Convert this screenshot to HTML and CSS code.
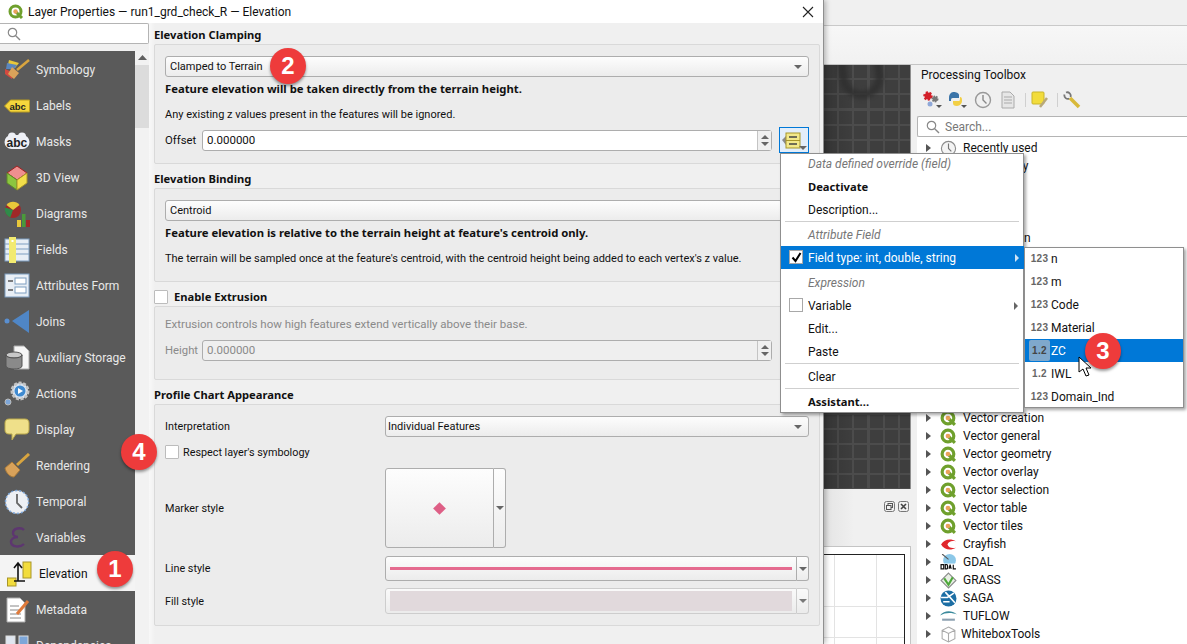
FILE: index.html
```html
<!DOCTYPE html>
<html lang="en">
<head>
    <meta charset="UTF-8">
    <title>Layer Properties - Elevation</title>
    <link rel="stylesheet" href="styles.css">
</head>
<body>
    <svg class="defs" width="0" height="0">
        <symbol id="qgis" viewBox="0 0 16 16">
            <circle cx="7.5" cy="7.5" r="5.5" fill="#fff" stroke="#6fa02d" stroke-width="3"/>
            <path d="M8 8l6 6" stroke="#6fa02d" stroke-width="3"/>
            <circle cx="7.5" cy="7.5" r="2.2" fill="#e8a25a"/>
        </symbol>
        <symbol id="clock" viewBox="0 0 24 24">
            <circle cx="12" cy="12" r="10" fill="#f4f4f4" stroke="#8c8c8c" stroke-width="1.6"/>
            <path d="M12 5v7l4 4" fill="none" stroke="#777" stroke-width="1.6"/>
        </symbol>
        <symbol id="arrow" viewBox="0 0 8 8">
            <path d="M0 2h8L4 6z" fill="#666"/>
        </symbol>
    </svg>

    <!-- main window behind the dialog -->
    <div class="app">
        <div class="menubar"></div>
        <div class="toolbar"></div>
        <div class="workspace">
            <div class="mapside">
                <div class="canvas"><div class="blob"></div></div>
                <div class="dockhead">
                    <svg width="11" height="11" viewBox="0 0 11 11"><rect x="0.500" y="0.500" width="10" height="10" rx="2" fill="none" stroke="#777"/><rect x="4" y="2.500" width="4.500" height="4" fill="none" stroke="#555"/><rect x="2.500" y="4.500" width="4.500" height="4" fill="#f0f0f0" stroke="#555"/></svg>
                    <svg width="11" height="11" viewBox="0 0 11 11"><rect x="0.500" y="0.500" width="10" height="10" rx="2" fill="none" stroke="#777"/><path d="M3 3l5 5M8 3l-5 5" stroke="#444" stroke-width="1.600"/></svg>
                </div>
                <div class="chart">
                    <div class="plot"></div>
                </div>
            </div>
            <div class="splitter"></div>
            <div class="toolbox">
                <div class="toolbox-title">Processing Toolbox</div>
                <div class="toolbox-icons">
                    <svg width="22" height="20" viewBox="0 0 22 20"><circle cx="6" cy="6" r="3.500" fill="#d3202a" stroke="#d3202a" stroke-dasharray="2 1.500" stroke-width="2.500"/><circle cx="13" cy="9" r="2.500" fill="#777" stroke="#777" stroke-dasharray="1.500 1" stroke-width="2"/><circle cx="8" cy="14" r="2.500" fill="#8fa8d8"/><path d="M14 15h6l-3 3z" fill="#555"/></svg>
                    <svg width="22" height="20" viewBox="0 0 22 20"><path d="M2 8c0-5 3-6 5-6s5 1 5 3v3H6c-2 0-2 1-2 3H2z" fill="#3b74a8"/><path d="M13 7c2 0 2 2 2 4s-2 5-5 5-4-1-4-3v-2h6c1 0 1-2 1-4z" fill="#f2cf45"/><path d="M14 15h6l-3 3z" fill="#555"/></svg>
                    <svg width="22" height="18" viewBox="0 0 18 18"><circle cx="9" cy="9" r="7.500" fill="#f0f0f0" stroke="#999" stroke-width="1.400"/><path d="M9 4v5l3.500 3.500" fill="none" stroke="#888" stroke-width="1.400"/></svg>
                    <svg width="22" height="18" viewBox="0 0 16 18"><path d="M2 1h8l4 4v12H2z" fill="#e6e6e6" stroke="#aaa"/><path d="M4 6h8M4 9h8M4 12h8" stroke="#aaa"/></svg>
                    <i class="tool-sep"></i>
                    <svg width="22" height="18" viewBox="0 0 18 18"><rect x="1" y="1" width="12" height="12" rx="1" fill="#f2dc3c" stroke="#c9b52a"/><path d="M9 16l7-9" stroke="#b8a87a" stroke-width="2.500"/></svg>
                    <i class="tool-sep"></i>
                    <svg width="22" height="18" viewBox="0 0 18 18"><path d="M1.500 3.500a3.500 3.500 0 0 0 5 4M3 1.500a3.500 3.500 0 0 1 4.500 4.500" fill="none" stroke="#777" stroke-width="1.800"/><path d="M7 7l9 9" stroke="#d8b93a" stroke-width="3.500"/></svg>
                </div>
                <div class="toolbox-search">
                    <svg width="14" height="14" viewBox="0 0 14 14"><circle cx="5.500" cy="5.500" r="4.200" fill="none" stroke="#888" stroke-width="1.200"/><path d="M8.700 8.700L13 13" stroke="#888" stroke-width="1.400"/></svg>
                    <span>Search...</span>
                </div>
                <ul class="tree">
                    <li><i class="twist"></i><svg class="tree-icon" width="16" height="16"><use href="#clock"/></svg>Recently used</li>
                    <li><i class="twist"></i><svg class="tree-icon" width="16" height="16"><use href="#qgis"/></svg>Cartography</li>
                    <li></li>
                    <li></li>
                    <li></li>
                    <li><i class="twist"></i><svg class="tree-icon" width="16" height="16"><use href="#qgis"/></svg>Interpolation</li>
                    <li></li>
                    <li></li>
                    <li></li>
                    <li></li>
                    <li></li>
                    <li></li>
                    <li></li>
                    <li></li>
                    <li></li>
                    <li><i class="twist"></i><svg class="tree-icon" width="16" height="16"><use href="#qgis"/></svg>Vector creation</li>
                    <li><i class="twist"></i><svg class="tree-icon" width="16" height="16"><use href="#qgis"/></svg>Vector general</li>
                    <li><i class="twist"></i><svg class="tree-icon" width="16" height="16"><use href="#qgis"/></svg>Vector geometry</li>
                    <li><i class="twist"></i><svg class="tree-icon" width="16" height="16"><use href="#qgis"/></svg>Vector overlay</li>
                    <li><i class="twist"></i><svg class="tree-icon" width="16" height="16"><use href="#qgis"/></svg>Vector selection</li>
                    <li><i class="twist"></i><svg class="tree-icon" width="16" height="16"><use href="#qgis"/></svg>Vector table</li>
                    <li><i class="twist"></i><svg class="tree-icon" width="16" height="16"><use href="#qgis"/></svg>Vector tiles</li>
                    <li><i class="twist"></i><svg class="tree-icon" width="16" height="16" viewBox="0 0 16 16"><path d="M15 5C10 2 4 3 1 8c3 5 9 6 14 3-4 1-7 0-8-3 1-3 4-4 8-3z" fill="#e0262c"/></svg>Crayfish</li>
                    <li><i class="twist"></i><svg class="tree-icon" width="16" height="16" viewBox="0 0 16 16"><circle cx="9" cy="6" r="6" fill="#8cc8e8"/><path d="M2 0l6 5" stroke="#555"/><rect x="0" y="9" width="16" height="7" fill="#fff"/><path d="M1 10h2.500v4H1zM5 10h1.500c1 0 1 4 0 4H5zM8.500 14l1-4 1 4M12.500 10v4h2.500" fill="none" stroke="#111" stroke-width="1.100"/></svg>GDAL</li>
                    <li><i class="twist"></i><svg class="tree-icon" width="16" height="16" viewBox="0 0 16 16"><path d="M8 1l7 7-7 7-7-7z" fill="#e8efe4" stroke="#8a8a8a"/><path d="M4 6l4 6 4-7" fill="none" stroke="#4ea83a" stroke-width="2"/></svg>GRASS</li>
                    <li><i class="twist"></i><svg class="tree-icon" width="16" height="16" viewBox="0 0 16 16"><circle cx="8" cy="8" r="7.500" fill="#1c6ea4"/><path d="M1 7h6l6-4M5 2l9 10M3 11h6" fill="none" stroke="#fff" stroke-width="1.500"/></svg>SAGA</li>
                    <li><i class="twist"></i><svg class="tree-icon" width="16" height="16" viewBox="0 0 16 16"><path d="M0 7c4-5 11-5 16-1-5-2-11-2-16 1z" fill="#3a8a9c"/><path d="M2 11h12" stroke="#8ca0b0" stroke-width="2"/></svg>TUFLOW</li>
                    <li class="tree-last"><i class="twist"></i><svg class="tree-icon" width="16" height="16" viewBox="0 0 16 16"><path d="M8 1l6 3v8l-6 3-6-3V4zM2 4l6 3 6-3M8 7v8" fill="#fff" stroke="#aaa"/></svg>WhiteboxTools</li>
                </ul>
            </div>
        </div>
    </div>

    <!-- layer properties dialog -->
    <div class="dialog">
        <div class="titlebar">
            <svg width="16" height="16"><use href="#qgis"/></svg>
            <span class="title-text">Layer Properties — run1_grd_check_R — Elevation</span>
            <svg class="close" width="12" height="12" viewBox="0 0 12 12"><path d="M1 1l10 10M11 1L1 11" stroke="#222" stroke-width="1.100"/></svg>
        </div>
        <div class="dialog-body">
            <div class="sidebar">
                <div class="side-search">
                    <svg width="14" height="14" viewBox="0 0 14 14"><circle cx="5.500" cy="5.500" r="4.200" fill="none" stroke="#888" stroke-width="1.200"/><path d="M8.700 8.700L13 13" stroke="#888" stroke-width="1.400"/></svg>
                </div>
                <div class="side-main">
                    <ul class="side-list">
                        <li><svg width="26" height="24" viewBox="0 0 26 24"><path d="M5 2l10 3-4 5-8 1z" fill="#e8c83a"/><path d="M3 5l10 2-3 4-8 0z" fill="#5a86bd"/><path d="M1 11l9 4-2 6-7-5z" fill="#d3493f"/><path d="M8 9l7 6-5 6-6-5z" fill="#d9a25a"/><path d="M13 12l12-10" stroke="#d9a53f" stroke-width="2.500"/></svg>Symbology</li>
                        <li><svg width="26" height="24" viewBox="0 0 26 24"><path d="M0.500 12l6-6h19v12H6.500z" fill="#f5d63c" stroke="#b79a20"/><text x="5.500" y="15.500" class="icon-text">abc</text></svg>Labels</li>
                        <li><svg width="26" height="24" viewBox="0 0 26 24"><rect x="0.500" y="5" width="25" height="14" rx="7" fill="#eef0f6"/><circle cx="8" cy="6.500" r="4" fill="#eef0f6"/><circle cx="18" cy="6.500" r="4" fill="#eef0f6"/><text x="2.500" y="16.500" class="icon-text big">abc</text></svg>Masks</li>
                        <li><svg width="26" height="26" viewBox="0 0 26 26"><path d="M13 1l10 7-10 7L3 8z" fill="#ee8f8f" stroke="#a02020"/><path d="M3 8l10 7v10L3 18z" fill="#8cc63f" stroke="#5e8a2a"/><path d="M23 8l-10 7v10l10-7z" fill="#f2de4a" stroke="#a8962a"/></svg>3D View</li>
                        <li><svg width="26" height="26" viewBox="0 0 26 26"><circle cx="9" cy="9" r="8" fill="#a02828"/><path d="M2.500 4a8 8 0 0 1 13 0L9 9z" fill="#e8c83a"/><path d="M9 9L1.300 6.500a8 8 0 0 0 5 10z" fill="#2f8a4a"/><rect x="13" y="19" width="4" height="7" fill="#e8c83a"/><rect x="18" y="13" width="3.500" height="13" fill="#4a9a3a"/><rect x="22" y="19" width="4" height="7" fill="#a02828"/></svg>Diagrams</li>
                        <li><svg width="26" height="26" viewBox="0 0 26 26"><rect x="1" y="2" width="24" height="22" fill="#e8eef5" stroke="#7d9dc0"/><path d="M1 7h24M1 12h24M1 17h24" stroke="#7d9dc0"/><rect x="5" y="0" width="7" height="26" fill="#f2ea70"/><rect x="7.500" y="3" width="2" height="2" fill="#fff"/></svg>Fields</li>
                        <li><svg width="26" height="26" viewBox="0 0 26 26"><rect x="1" y="1" width="24" height="23" fill="#e8eef5" stroke="#7d9dc0"/><path d="M4 8h5M4 17h5" stroke="#555" stroke-width="1.500"/><rect x="11" y="5" width="11" height="6" fill="#fff" stroke="#7d9dc0"/><rect x="11" y="14" width="11" height="6" fill="#fff" stroke="#7d9dc0"/></svg>Attributes Form</li>
                        <li><svg width="26" height="26" viewBox="0 0 26 26"><circle cx="3" cy="12" r="2.500" fill="#5a8fd0"/><path d="M8 12L25 1v23z" fill="#4f86c6"/></svg>Joins</li>
                        <li><svg width="26" height="26" viewBox="0 0 26 26"><path d="M10 1h10l5 5v18H10z" fill="#f6f6f6" stroke="#aaa"/><ellipse cx="10" cy="10" rx="8" ry="3" fill="#c8c8c8" stroke="#555"/><path d="M2 10v11c0 4 16 4 16 0V10c0 4-16 4-16 0z" fill="#8a8a8a" stroke="#555"/></svg>Auxiliary Storage</li>
                        <li><svg width="26" height="26" viewBox="0 0 26 26"><circle cx="16" cy="10" r="8" fill="#dce6f2" stroke="#c4c4c4" stroke-width="3" stroke-dasharray="3 1.500"/><circle cx="16" cy="10" r="5.500" fill="#3f8ad0"/><path d="M14 7l5 3-5 3z" fill="#fff"/><circle cx="4" cy="21" r="3" fill="#7da6d8" stroke="#bbb"/></svg>Actions</li>
                        <li><svg width="26" height="24" viewBox="0 0 26 24"><path d="M5 1h16c3 0 4 2 4 4v7c0 3-2 4-4 4H12l-4 6v-6H5c-3 0-4-2-4-4V5c0-2 1-4 4-4z" fill="#efe08a" stroke="#bba94a"/></svg>Display</li>
                        <li><svg width="26" height="26" viewBox="0 0 26 26"><path d="M1 15l7-6 8 8-6 7c-4 0-8-4-9-9z" fill="#d9a25a" stroke="#a87a3a"/><path d="M13 12L25 1" stroke="#d9a53f" stroke-width="3"/></svg>Rendering</li>
                        <li><svg width="26" height="26" viewBox="0 0 26 26"><circle cx="13" cy="13" r="11.500" fill="#eef0f4" stroke="#7da6d8" stroke-width="1.500" stroke-dasharray="2 2"/><path d="M13 5v9l5 5" fill="none" stroke="#666" stroke-width="1.800"/></svg>Temporal</li>
                        <li><svg width="26" height="24" viewBox="0 0 26 24"><path d="M20 4c-3-3-11-2-11 3 0 2 2 4 5 4-4 0-7 2-7 5 0 5 9 6 13 2" fill="none" stroke="#5d3670" stroke-width="2.400"/></svg>Variables</li>
                        <li class="side-active"><svg width="26" height="26" viewBox="0 0 26 26"><rect x="16" y="1" width="8" height="16" fill="#f2dc3c" stroke="#a8962a"/><rect x="0.500" y="17" width="8.500" height="8" fill="#f2dc3c" stroke="#a8962a"/><path d="M11 20V3M7 7l4-5 4 5M7 20h11" fill="none" stroke="#111" stroke-width="1.600"/></svg>Elevation</li>
                        <li><svg width="26" height="26" viewBox="0 0 26 26"><path d="M3 1h13l5 5v19H3z" fill="#fff" stroke="#aaa"/><path d="M6 9h9M6 13h9M6 17h11M6 21h11" stroke="#888"/><path d="M13 17L24 4" stroke="#e07a3a" stroke-width="3"/></svg>Metadata</li>
                        <li><svg width="26" height="26" viewBox="0 0 26 26"><rect x="2" y="3" width="9" height="9" fill="#dfe6f0" stroke="#ddd"/><rect x="15" y="3" width="9" height="9" fill="#7da6d8" stroke="#ddd"/><rect x="8" y="15" width="9" height="9" fill="#7da6d8" stroke="#ddd"/></svg>Dependencies</li>
                    </ul>
                    <div class="side-scroll">
                        <svg width="9" height="6" viewBox="0 0 9 6"><path d="M0 5h9L4.500 0z" fill="#606060"/></svg>
                        <div class="side-thumb"></div>
                    </div>
                </div>
            </div>

            <div class="pane">
                <div class="section-title first">Elevation Clamping</div>
                <div class="group group-clamp">
                    <div class="combo">Clamped to Terrain<svg width="8" height="8"><use href="#arrow"/></svg></div>
                    <div class="note-bold">Feature elevation will be taken directly from the terrain height.</div>
                    <div class="note">Any existing z values present in the features will be ignored.</div>
                    <div class="spin-row">
                        <span class="spin-label">Offset</span>
                        <div class="spin"><span class="spin-value">0.000000</span><span class="spin-btns"><i class="up"></i><i class="down"></i></span></div>
                        <div class="dd-btn">
                            <svg width="26" height="20" viewBox="0 0 26 20"><path d="M0 9l4-4v9z" fill="#8a8a8a"/><rect x="4" y="2" width="14" height="15" fill="#f2e88a" stroke="#a8962a"/><path d="M4 9.500h14" stroke="#a8962a"/><path d="M7 6h8M7 13h8" stroke="#444" stroke-width="1.300"/><path d="M17 15h8l-4 4z" fill="#666"/></svg>
                        </div>
                    </div>
                </div>

                <div class="section-title">Elevation Binding</div>
                <div class="group group-bind">
                    <div class="combo">Centroid</div>
                    <div class="note-bold">Feature elevation is relative to the terrain height at feature's centroid only.</div>
                    <div class="note">The terrain will be sampled once at the feature's centroid, with the centroid height being added to each vertex's z value.</div>
                </div>

                <div class="section-title check-title"><i class="check"></i>Enable Extrusion</div>
                <div class="group group-extrude">
                    <div class="note muted">Extrusion controls how high features extend vertically above their base.</div>
                    <div class="spin-row muted spin-end">
                        <span class="spin-label">Height</span>
                        <div class="spin spin-off"><span class="spin-value">0.000000</span><span class="spin-btns"><i class="up"></i><i class="down"></i></span></div>
                    </div>
                </div>

                <div class="section-title">Profile Chart Appearance</div>
                <div class="group group-profile">
                    <div class="form-row row-interp">
                        <span class="form-label">Interpretation</span>
                        <div class="combo grow">Individual Features<svg width="8" height="8"><use href="#arrow"/></svg></div>
                    </div>
                    <div class="check-row"><i class="check"></i>Respect layer's symbology</div>
                    <div class="form-row row-marker">
                        <span class="form-label">Marker style</span>
                        <div class="sym-btn marker-btn"><i class="diamond"></i></div>
                        <div class="sym-arrow"><svg width="8" height="8"><use href="#arrow"/></svg></div>
                    </div>
                    <div class="form-row row-line">
                        <span class="form-label">Line style</span>
                        <div class="sym-btn grow"><i class="line-swatch"></i></div>
                        <div class="sym-arrow"><svg width="8" height="8"><use href="#arrow"/></svg></div>
                    </div>
                    <div class="form-row row-fill">
                        <span class="form-label">Fill style</span>
                        <div class="sym-btn grow sym-off"><i class="fill-swatch"></i></div>
                        <div class="sym-arrow sym-off"><svg width="8" height="8"><use href="#arrow"/></svg></div>
                    </div>
                </div>
            </div>
        </div>
    </div>

    <!-- data defined menu -->
    <div class="menu menu-main">
        <div class="menu-item head first-item">Data defined override (field)</div>
        <div class="menu-item strong">Deactivate</div>
        <div class="menu-item">Description...</div>
        <div class="menu-sep"></div>
        <div class="menu-item head">Attribute Field</div>
        <div class="menu-item active"><i class="menu-check"><svg width="11" height="11" viewBox="0 0 11 11"><path d="M1.500 5.500l3 3.500 5-8" fill="none" stroke="#000" stroke-width="2"/></svg></i>Field type: int, double, string<b class="sub"></b></div>
        <div class="menu-item head after-active">Expression</div>
        <div class="menu-item"><i class="menu-check"></i>Variable<b class="sub"></b></div>
        <div class="menu-item">Edit...</div>
        <div class="menu-item">Paste</div>
        <div class="menu-sep"></div>
        <div class="menu-item">Clear</div>
        <div class="menu-sep"></div>
        <div class="menu-item strong">Assistant...</div>
    </div>

    <div class="menu menu-fields">
        <div class="field-item"><span class="type">123</span>n</div>
        <div class="field-item"><span class="type">123</span>m</div>
        <div class="field-item"><span class="type">123</span>Code</div>
        <div class="field-item"><span class="type">123</span>Material</div>
        <div class="field-item active"><span class="type boxed">1.2</span>ZC</div>
        <div class="field-item"><span class="type">1.2</span>IWL</div>
        <div class="field-item"><span class="type">123</span>Domain_Ind</div>
    </div>

    <svg class="cursor" width="14" height="21" viewBox="0 0 14 21"><path d="M1 1v15l4-3 3 7 3-1-3-7h5z" fill="#fff" stroke="#000"/></svg>

    <div class="badge badge-1">1</div>
    <div class="badge badge-2">2</div>
    <div class="badge badge-3">3</div>
    <div class="badge badge-4">4</div>
</body>
</html>
```

FILE: styles.css
```css
* {
    box-sizing: border-box;
}

html, body {
    margin: 0;
    height: 100%;
}

body {
    position: relative;
    width: 1187px;
    height: 644px;
    overflow: hidden;
    background-color: #f0f0f0;
    font-family: Roboto, sans-serif;
    font-size: 12px;
    color: #111;
}

ul {
    list-style: none;
    margin: 0;
    padding: 0;
}

.defs {
    position: absolute;
}

/* main window */
.app {
    display: flex;
    flex-direction: column;
    height: 644px;
    padding-left: 824px;
}

.menubar {
    height: 26px;
    background-color: #f0f0f0;
    border-bottom: 1px solid #c9c9c9;
}

.toolbar {
    height: 39px;
    background: linear-gradient(#f7f7f7, #f1f1f1);
    border-bottom: 1px solid #c4c4c4;
}

.workspace {
    flex: 1;
    display: flex;
    min-height: 0;
}

.mapside {
    width: 87px;
    display: flex;
    flex-direction: column;
}

.canvas {
    position: relative;
    height: 424px;
    overflow: hidden;
    background-color: #3e3e3e;
    background-image:
        linear-gradient(90deg, rgba(0, 0, 0, 0.15), transparent 30px),
        repeating-linear-gradient(90deg, transparent 0 13px, #4c4c4c 13px 15.2px),
        repeating-linear-gradient(180deg, transparent 0 13px, #4c4c4c 13px 15.2px);
    border-right: 1px solid #8f8f8f;
}

.blob {
    position: absolute;
    left: 14px;
    top: -32px;
    width: 44px;
    height: 66px;
    border: 8px solid #2e2e2e;
    border-radius: 0 0 22px 22px;
    transform: rotate(-8deg);
    filter: blur(2px);
    opacity: 0.8;
}

.dockhead {
    height: 57px;
    display: flex;
    justify-content: flex-end;
    gap: 3px;
    padding: 12px 2px 0 0;
    background: linear-gradient(90deg, #e4e4e4, #f0f0f0 30px);
}

.chart {
    flex: 1;
    background-color: #fff;
    border-top: 1px solid #c4c4c4;
    border-right: 1px solid #c4c4c4;
    padding-top: 7px;
}

.plot {
    height: 100%;
    width: 81px;
    border-top: 1px solid #222;
    border-right: 1px solid #222;
    background-image:
        linear-gradient(#e3e3e3, #e3e3e3),
        linear-gradient(#e3e3e3, #e3e3e3),
        linear-gradient(#e3e3e3, #e3e3e3),
        linear-gradient(#e3e3e3, #e3e3e3);
    background-size: 1px 100%, 1px 100%, 100% 1px, 100% 1px;
    background-position: 10px 0, 52px 0, 0 51px, 0 82px;
    background-repeat: no-repeat;
}

.splitter {
    width: 6px;
    background-color: #f0f0f0;
}

.toolbox {
    flex: 1;
    display: flex;
    flex-direction: column;
    min-width: 0;
}

.toolbox-title {
    height: 22px;
    padding: 2px 0 0 4px;
    line-height: 16px;
}

.toolbox-icons {
    display: flex;
    align-items: center;
    gap: 3px;
    height: 29px;
    padding: 0 0 3px 5px;
}

.tool-sep {
    width: 1px;
    height: 14px;
    margin-left: 3px;
    background-color: #d0d0d0;
}

.toolbox-search {
    display: flex;
    align-items: center;
    gap: 5px;
    height: 21px;
    padding-left: 8px;
    background-color: #fff;
    border: 1px solid #b4b4b4;
    border-right: 0;
    border-radius: 2px 0 0 2px;
    color: #777;
}

.tree {
    flex: 1;
    overflow: hidden;
    background-color: #fff;
    padding-top: 2px;
}

.tree li {
    display: flex;
    align-items: center;
    height: 18px;
    padding-left: 9px;
    white-space: nowrap;
}

.twist {
    width: 0;
    height: 0;
    border-left: 5px solid #555;
    border-top: 4px solid transparent;
    border-bottom: 4px solid transparent;
    margin-right: 9px;
}

.tree-icon {
    margin-right: 6px;
    width: 17px;
    height: 17px;
}

.tree-last .tree-icon {
    margin-right: 4px;
}

/* dialog */
.dialog {
    position: absolute;
    left: 0;
    top: 0;
    width: 824px;
    height: 644px;
    display: flex;
    flex-direction: column;
    background-color: #f0f0f0;
    border-right: 1px solid #8f8f8f;
    box-shadow: 2px 0 5px rgba(0, 0, 0, 0.25);
}

.titlebar {
    height: 23px;
    flex: none;
    display: flex;
    align-items: center;
    gap: 4px;
    padding: 0 9px 0 8px;
    background-color: #fff;
}

.title-text {
    flex: 1;
}

.dialog-body {
    flex: 1;
    display: flex;
    min-height: 0;
}

.sidebar {
    width: 149px;
    flex: none;
    display: flex;
    flex-direction: column;
}

.side-search {
    height: 21px;
    flex: none;
    margin-bottom: 7px;
    padding: 3px 0 0 7px;
    background-color: #fff;
    border: 1px solid #b4b4b4;
    border-width: 1px 1px 1px 0;
    border-radius: 0 2px 2px 0;
}

.side-main {
    flex: 1;
    display: flex;
    min-height: 0;
}

.side-list {
    width: 135px;
    overflow: hidden;
    background-color: #5a5a5a;
    color: #e8e8e8;
}

.side-list li {
    display: flex;
    align-items: center;
    gap: 6px;
    height: 36px;
    padding: 2px 0 0 4px;
    white-space: nowrap;
}

.side-list svg {
    flex: none;
}

.side-list .side-active {
    padding-left: 7px;
    color: #111;
    background-color: #f4f4f4;
}

.icon-text {
    font: bold 9.500px "Liberation Sans", sans-serif;
    fill: #222;
}

.icon-text.big {
    font-size: 12px;
}

.side-scroll {
    width: 14px;
    display: flex;
    flex-direction: column;
    align-items: center;
    padding-top: 4px;
    background-color: #f2f2f2;
}

.side-thumb {
    width: 14px;
    height: 63px;
    margin-top: 4px;
    background-color: #dcdcdc;
}

.pane {
    flex: 1;
    padding: 0 3px 0 5px;
    background: linear-gradient(90deg, #f8f8f8, #f0f0f0 6px);
    font-size: 11px;
}

.section-title {
    height: 24px;
    padding-top: 7px;
    line-height: 16px;
    font-family: "Noto Sans", sans-serif;
    font-size: 11.2px;
    font-weight: bold;
}

.section-title.first {
    height: 21px;
    padding-top: 4px;
}

.check-title {
    display: flex;
    align-items: center;
    gap: 6px;
    padding-top: 6px;
}

.check {
    display: inline-block;
    flex: none;
    width: 14px;
    height: 14px;
    background-color: #fff;
    border: 1px solid #bcbcbc;
    border-radius: 1px;
}

.group {
    display: flex;
    flex-direction: column;
    padding: 11px 10px 0;
    background-color: #ececec;
    border: 1px solid #d9d9d9;
    border-radius: 2px;
}

.group-clamp { height: 120px; }
.group-bind { height: 94px; }
.group-extrude { height: 74px; padding-top: 6px; }
.group-profile { height: 222px; }

.combo {
    position: relative;
    display: flex;
    align-items: center;
    justify-content: space-between;
    height: 21px;
    flex: none;
    padding: 0 6px 0 4px;
    background: linear-gradient(#fdfdfd, #ececec);
    border: 1px solid #adadad;
    border-radius: 3px;
}

.combo.grow {
    padding-left: 2px;
}

.note-bold {
    height: 24px;
    line-height: 24px;
    font-family: "Noto Sans", sans-serif;
    font-size: 11.3px;
    font-weight: bold;
    white-space: nowrap;
}

.note {
    height: 26px;
    line-height: 28px;
    white-space: nowrap;
}

.group-extrude .note {
    height: 24px;
    line-height: 22px;
    font-size: 11.5px;
}

.muted {
    color: #8a8a8a;
}

.spin-row {
    display: flex;
    align-items: center;
    height: 24px;
    margin-top: 1px;
}

.spin-end {
    padding-right: 37px;
}

.spin-label {
    width: 37px;
    flex: none;
    font-size: 11.300px;
}

.spin {
    flex: 1;
    display: flex;
    height: 21px;
    background-color: #fff;
    border: 1px solid #adadad;
    border-radius: 3px;
}

.spin-off {
    background-color: #efefef;
}

.spin-value {
    flex: 1;
    padding-left: 4px;
    line-height: 19px;
    font-size: 11.500px;
}

.spin-btns {
    width: 14px;
    display: flex;
    flex-direction: column;
    align-items: center;
    justify-content: center;
    gap: 3px;
    background-color: #f0f0f0;
    border-left: 1px solid #c4c4c4;
}

.up, .down {
    width: 0;
    height: 0;
    border-left: 4px solid transparent;
    border-right: 4px solid transparent;
}

.up { border-bottom: 4px solid #666; }
.down { border-top: 4px solid #666; }

.dd-btn {
    flex: none;
    width: 30px;
    height: 26px;
    margin-left: 7px;
    padding: 3px 0 0 2px;
    background-color: #e3eefa;
    border: 1px solid #0078d7;
}

.form-row {
    display: flex;
    align-items: center;
}

.form-label {
    width: 220px;
    flex: none;
    font-size: 10.800px;
}

.grow {
    flex: 1;
}

.check-row {
    display: flex;
    align-items: center;
    gap: 4px;
    height: 22px;
    margin-top: 4px;
    font-size: 10.800px;
}

.row-marker { height: 80px; margin-top: 5px; }
.row-line { height: 25px; margin-top: 8px; }
.row-fill { height: 26px; margin-top: 7px; }

.sym-btn {
    display: flex;
    align-items: center;
    justify-content: center;
    align-self: stretch;
    padding: 0 4px;
    background: linear-gradient(#fdfdfd, #ececec);
    border: 1px solid #adadad;
    border-radius: 3px 0 0 3px;
}

.marker-btn {
    width: 109px;
}

.sym-arrow {
    display: flex;
    align-items: center;
    justify-content: center;
    align-self: stretch;
    width: 12px;
    background: linear-gradient(#fdfdfd, #ececec);
    border: 1px solid #adadad;
    border-left: 0;
    border-radius: 0 3px 3px 0;
}

.sym-off {
    border-color: #c8c8c8;
    opacity: 0.85;
}

.diamond {
    width: 9px;
    height: 9px;
    transform: rotate(45deg);
    background-color: #de5f86;
}

.line-swatch {
    width: 100%;
    height: 3px;
    background-color: #e56b8f;
}

.fill-swatch {
    width: 100%;
    height: 20px;
    background-color: #e0d6da;
}

/* popup menus */
.menu {
    position: absolute;
    background-color: #fff;
    border: 1px solid #8f8f8f;
    box-shadow: 2px 2px 3px rgba(0, 0, 0, 0.35);
}

.menu-main {
    left: 780px;
    top: 153px;
    width: 244px;
    height: 260px;
}

.menu-item {
    position: relative;
    display: flex;
    align-items: center;
    height: 23px;
    padding-left: 27px;
    white-space: nowrap;
}

.first-item {
    margin-top: -2px;
}

.after-active {
    margin-top: 2px;
}

.menu-item.head {
    font-style: italic;
    color: #777;
}

.menu-item.strong {
    font-family: "Noto Sans", sans-serif;
    font-size: 11.2px;
    font-weight: bold;
}

.menu-item.active {
    margin: 0 -1px 0 0;
    color: #fff;
    background-color: #0078d7;
}

.menu-check {
    position: absolute;
    left: 8px;
    top: 4px;
    width: 14px;
    height: 14px;
    padding: 1px;
    background-color: #fff;
    border: 1px solid #a8a8a8;
}

.menu-check svg {
    display: block;
}

.sub {
    position: absolute;
    right: 5px;
    top: 8px;
    border-left: 4px solid #666;
    border-top: 4px solid transparent;
    border-bottom: 4px solid transparent;
}

.active .sub {
    border-left-color: #cfe3f6;
}

.menu-sep {
    height: 1px;
    margin: 0 4px 1px;
    background-color: #cfcfcf;
}

.menu-fields {
    left: 1024px;
    top: 247px;
    width: 160px;
    height: 161px;
}

.field-item {
    display: flex;
    align-items: center;
    height: 23px;
    padding-left: 4px;
}

.field-item:first-child {
    margin-top: -1px;
}

.field-item.active {
    color: #fff;
    background-color: #0078d7;
}

.type {
    width: 21px;
    margin-right: 1px;
    font: bold 10px "Liberation Sans", sans-serif;
    letter-spacing: 0.3px;
    text-align: center;
    color: #666;
}

.type.boxed {
    height: 21px;
    line-height: 21px;
    background-color: #7fa8cc;
    border-radius: 2px;
    color: #444;
}

.cursor {
    position: absolute;
    left: 1078px;
    top: 356px;
}

/* numbered callouts */
.badge {
    position: absolute;
    width: 36px;
    height: 36px;
    border-radius: 50%;
    background-color: #ee3b3b;
    box-shadow: 0 2px 3px rgba(0, 0, 0, 0.4);
    color: #fff;
    font: bold 24px/36px "Liberation Sans", sans-serif;
    text-align: center;
}

.badge-1 { left: 97px; top: 551px; }
.badge-2 { left: 270px; top: 48px; }
.badge-3 { left: 1085px; top: 333px; }
.badge-4 { left: 121px; top: 434px; }
```
